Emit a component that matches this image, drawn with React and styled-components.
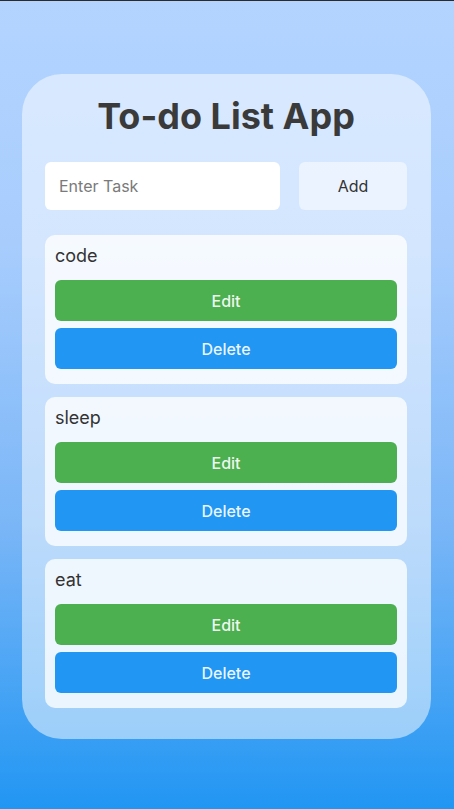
import React, { useState } from "react";
import styled, { createGlobalStyle } from "styled-components";

const GlobalStyle = createGlobalStyle`
  html, body {
    margin: 0;
    padding: 0;
  }
  body {
    font-family: Inter, "Noto Sans", sans-serif;
    color: #333;
    border-top: 1px solid #2b2b2b;
    background: linear-gradient(to bottom, #b3d4ff 0%, #a8cdfd 30%, #7ab6f7 65%, #2196f3 100%);
    min-height: 808px;
  }
`;

const Page = styled.div`
  display: flex;
  justify-content: center;
  padding: 73px 23px 0 22px;
`;

const Card = styled.div`
  width: 100%;
  box-sizing: border-box;
  padding: 20px 24px 31px 23px;
  border-radius: 40px;
  background: rgba(255, 255, 255, 0.5);
`;

const Title = styled.h1`
  margin: 0 0 24px;
  font-size: 36px;
  line-height: 44px;
  font-weight: 700;
  text-align: center;
  color: #3a3a3a;
`;

const InputRow = styled.div`
  display: flex;
  gap: 19px;
  margin-bottom: 25px;
`;

const TaskInput = styled.input`
  flex: 1;
  min-width: 0;
  height: 48px;
  box-sizing: border-box;
  border: none;
  border-radius: 6px;
  padding: 0 14px;
  font-family: inherit;
  font-size: 16px;
  background: #fff;
  outline: none;

  &::placeholder {
    color: #7a7a7a;
  }
`;

const AddButton = styled.button`
  width: 108px;
  height: 48px;
  border: none;
  border-radius: 6px;
  background: rgba(255, 255, 255, 0.5);
  font-family: inherit;
  font-size: 16px;
  color: #333;
`;

const List = styled.div`
  display: flex;
  flex-direction: column;
  gap: 13px;
`;

const Item = styled.div`
  display: flex;
  flex-direction: column;
  gap: 7px;
  padding: 10px 10px 15px;
  border-radius: 10px;
  background: rgba(255, 255, 255, 0.78);
`;

const ItemText = styled.div`
  font-size: 18px;
  line-height: 22px;
  margin-bottom: 6px;
  color: #333;
`;

const ActionButton = styled.button`
  height: 41px;
  border: none;
  border-radius: 6px;
  background: ${(p) => (p.$kind === "edit" ? "#4caf50" : "#2196f3")};
  color: rgba(255, 255, 255, 0.92);
  font-family: inherit;
  font-size: 16px;
  font-weight: 500;
`;

export default function App() {
  const [tasks] = useState(["code", "sleep", "eat"]);

  return (
    <>
      <GlobalStyle />
      <Page>
        <Card>
          <Title>To-do List App</Title>
          <InputRow>
            <TaskInput placeholder="Enter Task" />
            <AddButton>Add</AddButton>
          </InputRow>
          <List>
            {tasks.map((t) => (
              <Item key={t}>
                <ItemText>{t}</ItemText>
                <ActionButton $kind="edit">Edit</ActionButton>
                <ActionButton $kind="delete">Delete</ActionButton>
              </Item>
            ))}
          </List>
        </Card>
      </Page>
    </>
  );
}
